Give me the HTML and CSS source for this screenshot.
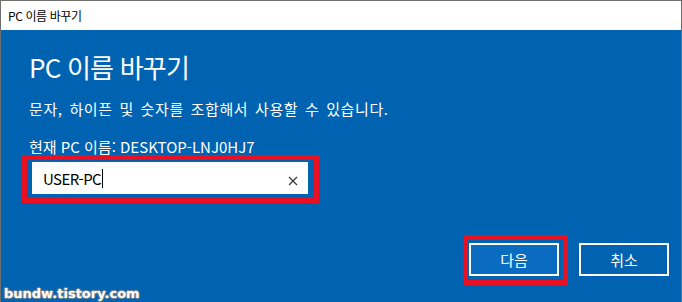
FILE: index.html
```html
<!DOCTYPE html>
<html lang="ko">
<head>
    <meta charset="UTF-8">
    <title>PC 이름 바꾸기</title>
    <link rel="stylesheet" href="styles.css">
</head>
<body>
    <div class="window">
        <div class="titlebar">PC 이름 바꾸기</div>
        <div class="dialog">
            <h1>PC 이름 바꾸기</h1>
            <p class="hint">문자, 하이픈 및 숫자를 조합해서 사용할 수 있습니다.</p>
            <p class="current">현재 PC 이름: DESKTOP-LNJ0HJ7</p>
            <div class="field marked">
                <span class="value">USER-PC</span><span class="caret"></span>
                <svg class="clear" width="10" height="10" viewBox="0 0 10 10">
                    <path d="M1 1 L9 9 M9 1 L1 9" stroke="#333" stroke-width="1.1" fill="none"/>
                </svg>
            </div>
            <div class="actions">
                <button class="btn primary marked">다음</button>
                <button class="btn">취소</button>
            </div>
        </div>
        <div class="watermark">bundw.tistory.com</div>
    </div>
</body>
</html>
```

FILE: styles.css
```css
body {
    margin: 0;
    font-family: "Noto Sans CJK KR", "Noto Sans", sans-serif;
}
.window {
    position: relative;
    width: 682px;
    height: 302px;
    box-sizing: border-box;
    border: 1px solid #6f6f6f;
    border-bottom: none;
    background-color: #0063b1;
    display: flex;
    flex-direction: column;
    overflow: hidden;
}
.titlebar {
    height: 29px;
    line-height: 29px;
    background-color: #fff;
    color: #000;
    font-size: 12px;
    letter-spacing: -0.4px;
    padding-left: 7px;
}
.dialog {
    flex-grow: 1;
    padding: 0 12px 0 28px;
    color: #fff;
    display: flex;
    flex-direction: column;
}
.dialog h1 {
    font-size: 26px;
    font-weight: 400;
    line-height: 34px;
    letter-spacing: -0.8px;
    margin: 20px 0 0 0;
}
.hint {
    font-size: 15px;
    line-height: 20px;
    letter-spacing: 0.6px;
    word-spacing: 2px;
    margin: 15px 0 0 0;
}
.current {
    font-size: 15px;
    line-height: 18px;
    margin: 19px 0 0 0;
}
.field {
    position: relative;
    width: 276px;
    height: 32px;
    margin: 6px 0 0 3px;
    background-color: #fff;
    color: #000;
    display: flex;
    align-items: center;
    padding-left: 11px;
    box-sizing: border-box;
    font-size: 15px;
    letter-spacing: -0.6px;
}
.caret {
    width: 1px;
    height: 19px;
    background-color: #000;
    margin-left: 1px;
}
.clear {
    position: absolute;
    right: 10px;
    top: 14px;
}
.actions {
    display: flex;
    justify-content: flex-end;
    gap: 20px;
    margin-top: 49px;
}
.btn {
    width: 90px;
    height: 33px;
    border: 2px solid #fff;
    background-color: #0063b1;
    color: #fff;
    font-family: inherit;
    font-size: 15px;
    padding: 0;
}
.btn.primary {
    position: relative;
    background-color: #0a6cc0;
}
.marked::after {
    content: "";
    position: absolute;
    border: 5px solid #e81123;
}
.field.marked::after {
    top: -7px;
    left: -10px;
    right: -11px;
    bottom: -9px;
}
.btn.marked::after {
    top: -10px;
    left: -8px;
    right: -11px;
    bottom: -11px;
}
.watermark {
    position: absolute;
    left: 3px;
    bottom: 1px;
    font-family: "DejaVu Sans", sans-serif;
    font-weight: bold;
    font-size: 13px;
    color: #fff;
    text-shadow: 1px 0 1px #8a8a8a, -1px 0 1px #8a8a8a, 0 1px 1px #8a8a8a, 0 -1px 1px #8a8a8a;
}
```
